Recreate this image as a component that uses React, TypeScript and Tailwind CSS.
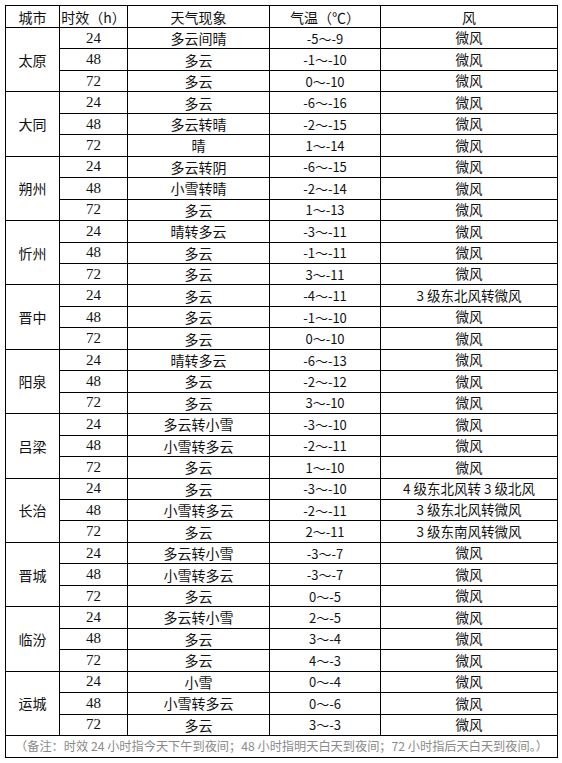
import React from "react";

type Row = [string, string, string, string];
type City = { name: string; rows: Row[] };

const data: City[] = [
  { name: "太原", rows: [["24", "多云间晴", "-5～-9", "微风"], ["48", "多云", "-1～-10", "微风"], ["72", "多云", "0～-10", "微风"]] },
  { name: "大同", rows: [["24", "多云", "-6～-16", "微风"], ["48", "多云转晴", "-2～-15", "微风"], ["72", "晴", "1～-14", "微风"]] },
  { name: "朔州", rows: [["24", "多云转阴", "-6～-15", "微风"], ["48", "小雪转晴", "-2～-14", "微风"], ["72", "多云", "1～-13", "微风"]] },
  { name: "忻州", rows: [["24", "晴转多云", "-3～-11", "微风"], ["48", "多云", "-1～-11", "微风"], ["72", "多云", "3～-11", "微风"]] },
  { name: "晋中", rows: [["24", "多云", "-4～-11", "3 级东北风转微风"], ["48", "多云", "-1～-10", "微风"], ["72", "多云", "0～-10", "微风"]] },
  { name: "阳泉", rows: [["24", "晴转多云", "-6～-13", "微风"], ["48", "多云", "-2～-12", "微风"], ["72", "多云", "3～-10", "微风"]] },
  { name: "吕梁", rows: [["24", "多云转小雪", "-3～-10", "微风"], ["48", "小雪转多云", "-2～-11", "微风"], ["72", "多云", "1～-10", "微风"]] },
  { name: "长治", rows: [["24", "多云", "-3～-10", "4 级东北风转 3 级北风"], ["48", "小雪转多云", "-2～-11", "3 级东北风转微风"], ["72", "多云", "2～-11", "3 级东南风转微风"]] },
  { name: "晋城", rows: [["24", "多云转小雪", "-3～-7", "微风"], ["48", "小雪转多云", "-3～-7", "微风"], ["72", "多云", "0～-5", "微风"]] },
  { name: "临汾", rows: [["24", "多云转小雪", "2～-5", "微风"], ["48", "多云", "3～-4", "微风"], ["72", "多云", "4～-3", "微风"]] },
  { name: "运城", rows: [["24", "小雪", "0～-4", "微风"], ["48", "小雪转多云", "0～-6", "微风"], ["72", "多云", "3～-3", "微风"]] },
];

function Cell({ children, className = "text-[14px] text-[#111]" }: { children: React.ReactNode; className?: string }) {
  return (
    <div className={`bg-white flex items-center justify-center leading-none whitespace-nowrap ${className}`}>
      {children}
    </div>
  );
}

export default function App() {
  return (
    <div className="bg-white w-[562px] h-[763px] pt-[5px] pl-[5px]">
      <div className="grid grid-cols-[53px_67px_141px_110px_176px] grid-rows-[21px_repeat(33,minmax(0,1fr))_21px] gap-px p-px bg-black w-[553px] h-[753px] font-['Noto_Sans_CJK_SC',sans-serif]">
        <Cell>城市</Cell>
        <Cell>时效（h）</Cell>
        <Cell>天气现象</Cell>
        <Cell>气温（℃）</Cell>
        <Cell>风</Cell>
        {data.map((c) => (
          <React.Fragment key={c.name}>
            <Cell className="row-span-3 text-[14px] text-[#111]">{c.name}</Cell>
            {c.rows.map((r, i) => (
              <React.Fragment key={i}>
                <Cell className="font-['Liberation_Serif',serif] text-[15px] text-[#111]">{r[0]}</Cell>
                <Cell>{r[1]}</Cell>
                <Cell className="text-[13px] text-[#111]">{r[2]}</Cell>
                <Cell className="text-[13.5px] text-[#111]">{r[3]}</Cell>
              </React.Fragment>
            ))}
          </React.Fragment>
        ))}
        <Cell className="col-span-5 text-[12.2px] text-[#8a8a8a]">
          （备注：时效 24 小时指今天下午到夜间；48 小时指明天白天到夜间；72 小时指后天白天到夜间。）
        </Cell>
      </div>
    </div>
  );
}
